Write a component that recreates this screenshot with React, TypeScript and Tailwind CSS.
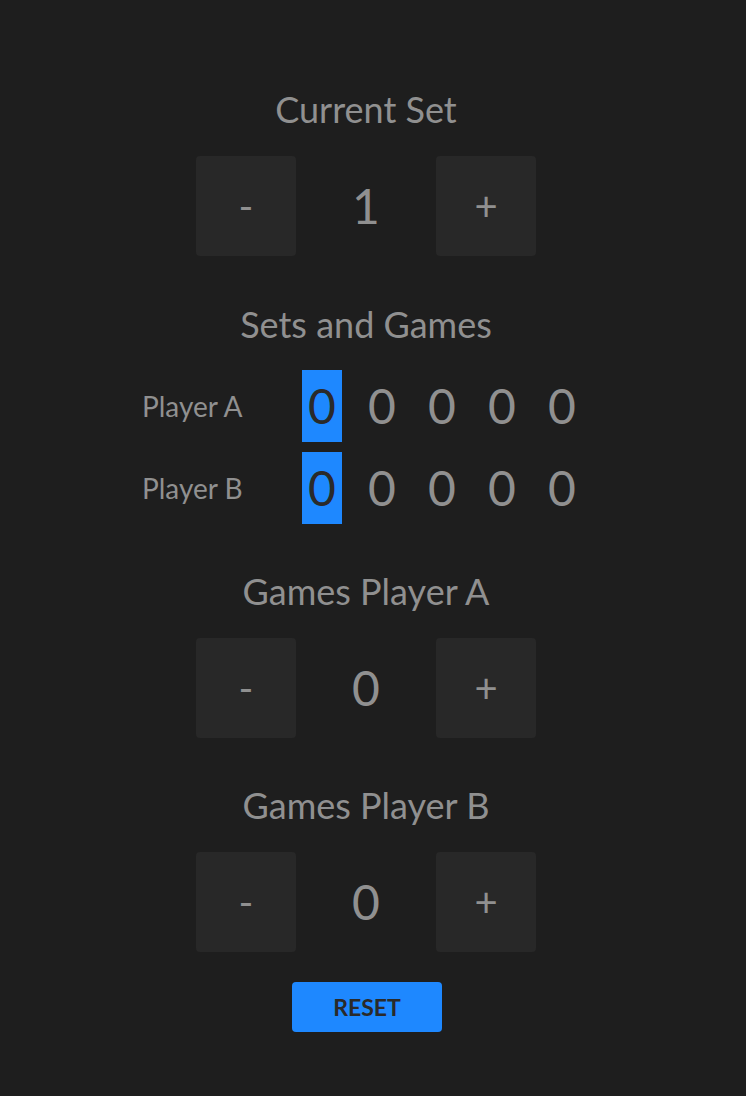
import { useState } from 'react';

const FONT = "font-['Lato','Liberation_Sans',sans-serif]";

const Counter = ({
  title,
  value,
  onChange,
}: {
  title: string;
  value: number;
  onChange: (v: number) => void;
}) => (
  <div className="flex flex-col items-center">
    <h2 className="text-[36px] leading-[54px] font-normal">{title}</h2>
    <div className="mt-[20px] flex items-center">
      <button
        className="w-[100px] h-[100px] rounded-[4px] bg-[#282828] text-[40px] text-[#909090]"
        onClick={() => onChange(Math.max(0, value - 1))}
        type="button"
      >
        -
      </button>
      <div className="w-[140px] text-center text-[48px] leading-[72px]">{value}</div>
      <button
        className="w-[100px] h-[100px] rounded-[4px] bg-[#282828] text-[40px] text-[#909090]"
        onClick={() => onChange(value + 1)}
        type="button"
      >
        +
      </button>
    </div>
  </div>
);

const ScoreRow = ({ label, scores, current }: { label: string; scores: number[]; current: number }) => (
  <div className="flex items-center gap-[20px]">
    <div className="w-[140px] text-[28px] leading-[42px]">{label}</div>
    {scores.map((s, i) => (
      <div
        key={i}
        className={
          i === current
            ? 'w-[40px] text-center text-[48px] leading-[72px] bg-[#1e88ff] text-[#2a2a2a]'
            : 'w-[40px] text-center text-[48px] leading-[72px]'
        }
      >
        {s}
      </div>
    ))}
  </div>
);

export default function App() {
  const [set, setSet] = useState(1);
  const [gamesA, setGamesA] = useState(0);
  const [gamesB, setGamesB] = useState(0);

  return (
    <div className={`${FONT} min-h-screen bg-[#1e1e1e] text-[#909090] flex flex-col items-center pt-[82px] pr-[14px]`}>
      <Counter title="Current Set" value={set} onChange={setSet} />

      <h2 className="mt-[41px] text-[36px] leading-[54px]">Sets and Games</h2>
      <div className="mt-[19px] flex flex-col gap-[10px] pr-[8px]">
        <ScoreRow label="Player A" scores={[0, 0, 0, 0, 0]} current={set - 1} />
        <ScoreRow label="Player B" scores={[0, 0, 0, 0, 0]} current={set - 1} />
      </div>

      <div className="mt-[40px]">
        <Counter title="Games Player A" value={gamesA} onChange={setGamesA} />
      </div>
      <div className="mt-[40px]">
        <Counter title="Games Player B" value={gamesB} onChange={setGamesB} />
      </div>

      <button
        className="mt-[30px] ml-[2px] w-[150px] h-[50px] rounded-[4px] bg-[#1e88ff] text-[23px] font-bold text-[#2a2a2a]"
        onClick={() => {
          setSet(1);
          setGamesA(0);
          setGamesB(0);
        }}
        type="button"
      >
        RESET
      </button>
    </div>
  );
}
